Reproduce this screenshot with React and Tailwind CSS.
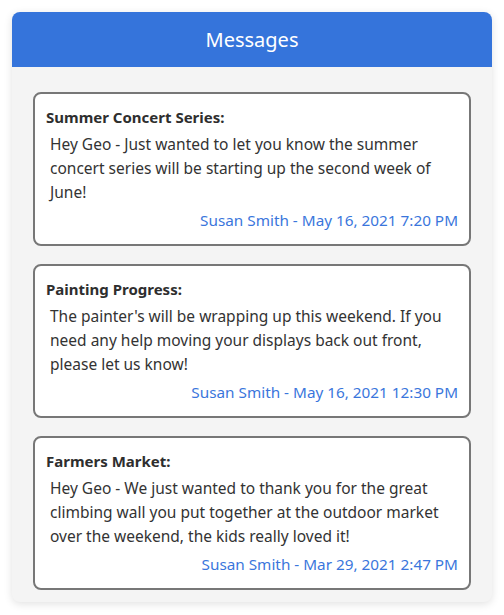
const MESSAGES = [
  {
    title: "Summer Concert Series:",
    body: "Hey Geo - Just wanted to let you know the summer concert series will be starting up the second week of June!",
    meta: "Susan Smith - May 16, 2021 7:20 PM",
  },
  {
    title: "Painting Progress:",
    body: "The painter's will be wrapping up this weekend. If you need any help moving your displays back out front, please let us know!",
    meta: "Susan Smith - May 16, 2021 12:30 PM",
  },
  {
    title: "Farmers Market:",
    body: "Hey Geo - We just wanted to thank you for the great climbing wall you put together at the outdoor market over the weekend, the kids really loved it!",
    meta: "Susan Smith - Mar 29, 2021 2:47 PM",
  },
];

export default function App() {
  return (
    <div
      className="min-h-screen bg-white px-3 pt-3"
      style={{ fontFamily: '"Noto Sans", "Open Sans", sans-serif' }}
    >
      <div className="rounded-lg overflow-hidden bg-[#f4f4f4] shadow-[0_2px_8px_rgba(0,0,0,0.12)]">
        <div className="h-[55px] bg-[#3574db] flex items-center justify-center">
          <h1 className="text-[20px] text-white">Messages</h1>
        </div>

        <div className="px-[21px] pt-[25px] pb-[12px] flex flex-col gap-[18px]">
          {MESSAGES.map((m) => (
            <div
              key={m.title}
              className="h-[154px] bg-white border-2 border-[#777777] rounded-lg px-[11px] pt-[12px] text-[#333333]"
            >
              <p className="text-[15px] font-bold leading-[22px] text-[#2e2e2e]">{m.title}</p>
              <p className="pl-1 mt-[4px] text-[15.5px] leading-[24px]">{m.body}</p>
              <p className="mt-[4px] text-right text-[15.3px] leading-[24px] text-[#3a76dc]">
                {m.meta}
              </p>
            </div>
          ))}
        </div>
      </div>
    </div>
  );
}
